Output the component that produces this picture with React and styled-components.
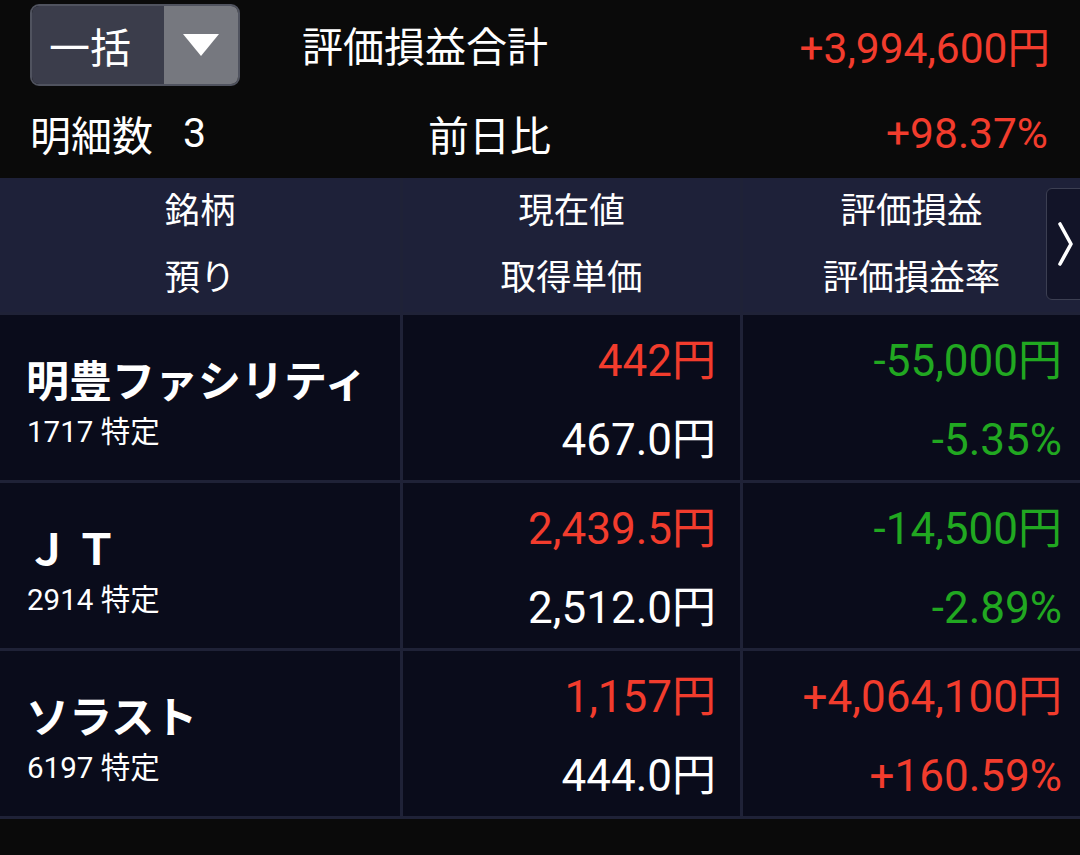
import React from 'react';
import styled, { createGlobalStyle } from 'styled-components';

const GlobalStyle = createGlobalStyle`
  html, body {
    margin: 0;
    padding: 0;
    background: #0a0a0a;
  }
  body {
    font-family: Roboto, "Noto Sans CJK JP", sans-serif;
    color: #fff;
  }
`;

const RED = '#f23c2d';
const GREEN = '#21a821';

const Page = styled.div`
  width: 1080px;
  height: 855px;
  overflow: hidden;
  background: #0a0a0a;
`;

const Summary = styled.div`
  display: flex;
  flex-direction: column;
`;

const SummaryRow = styled.div`
  display: flex;
  align-items: center;
  height: ${(p) => p.$h}px;
  padding: 0 ${(p) => p.$pr}px 0 30px;
  font-size: 41px;
`;

const Dropdown = styled.div`
  display: flex;
  width: 210px;
  height: 82px;
  margin-top: 2px;
  box-sizing: border-box;
  border: 2px solid #50535f;
  border-radius: 9px;
  overflow: hidden;
`;

const DropLabel = styled.div`
  flex: 0 0 132px;
  display: flex;
  align-items: center;
  padding-left: 17px;
  box-sizing: border-box;
  background: #3b3d4b;
  font-size: 41px;
`;

const DropArrow = styled.div`
  flex: 1;
  display: flex;
  align-items: center;
  justify-content: center;
  background: #76787f;
`;

const LeftBox = styled.div`
  flex: 0 0 ${(p) => p.$w}px;
  display: flex;
  align-items: center;
`;

const Count = styled.span`
  margin-left: 30px;
`;

const Label = styled.div`
  white-space: nowrap;
`;

const Value = styled.div`
  margin-left: auto;
  color: ${(p) => p.$color};
  font-size: 42.5px;
  white-space: nowrap;
`;

const Table = styled.div`
  display: grid;
  grid-template-columns: 400px 337px 337px;
  gap: 3px;
  background: #1f2237;
  padding-bottom: 3px;
`;

const HeaderCell = styled.div`
  display: flex;
  flex-direction: column;
  align-items: center;
  background: #1e2139;
  height: 134px;
  font-size: 35.5px;
  position: relative;
`;

const HeaderLine = styled.div`
  height: 67px;
  line-height: 67px;
`;

const MoreButton = styled.div`
  position: absolute;
  top: 10px;
  right: -10px;
  width: 44px;
  height: 112px;
  box-sizing: border-box;
  border: 1px solid #3c3f52;
  border-radius: 6px;
  background: #121428;
  display: flex;
  align-items: center;
  padding-left: 10px;
`;

const NameCell = styled.div`
  background: #0a0c1b;
  height: 165px;
  padding: 42px 0 0 26px;
  box-sizing: border-box;
`;

const Name = styled.div`
  font-size: 43px;
  font-weight: 700;
  line-height: 50px;
  white-space: nowrap;
  letter-spacing: ${(p) => (p.$wide ? '6px' : '0')};
`;

const Code = styled.div`
  font-size: 29.5px;
  line-height: 36px;
  margin-top: 7px;
  padding-left: 1px;
`;

const ValueCell = styled.div`
  background: #0a0c1b;
  height: 165px;
  padding: 22px ${(p) => p.$pr}px 0 0;
  box-sizing: border-box;
  display: flex;
  flex-direction: column;
  align-items: flex-end;
  gap: 31px;
`;

const Num = styled.div`
  font-size: 44px;
  line-height: 48px;
  color: ${(p) => p.$color};
  white-space: nowrap;
`;

const rows = [
  {
    name: '明豊ファシリティ',
    code: '1717 特定',
    price: '442円',
    priceColor: RED,
    cost: '467.0円',
    pl: '-55,000円',
    rate: '-5.35%',
    plColor: GREEN,
  },
  {
    name: 'ＪＴ',
    wide: true,
    code: '2914 特定',
    price: '2,439.5円',
    priceColor: RED,
    cost: '2,512.0円',
    pl: '-14,500円',
    rate: '-2.89%',
    plColor: GREEN,
  },
  {
    name: 'ソラスト',
    code: '6197 特定',
    price: '1,157円',
    priceColor: RED,
    cost: '444.0円',
    pl: '+4,064,100円',
    rate: '+160.59%',
    plColor: RED,
  },
];

function Triangle() {
  return (
    <svg width="36" height="24" viewBox="0 0 36 24">
      <polygon points="0,1 36,1 18,23" fill="#fff" />
    </svg>
  );
}

function Chevron() {
  return (
    <svg width="18" height="46" viewBox="0 0 18 46">
      <polyline
        points="3,3 14,23 3,43"
        fill="none"
        stroke="#fff"
        strokeWidth="3.6"
        strokeLinecap="round"
        strokeLinejoin="round"
      />
    </svg>
  );
}

export default function App() {
  return (
    <Page>
      <GlobalStyle />
      <Summary>
        <SummaryRow $h={88} $pr={30}>
          <LeftBox $w={272}>
            <Dropdown>
              <DropLabel>一括</DropLabel>
              <DropArrow>
                <Triangle />
              </DropArrow>
            </Dropdown>
          </LeftBox>
          <Label>評価損益合計</Label>
          <Value $color={RED}>+3,994,600円</Value>
        </SummaryRow>
        <SummaryRow $h={90} $pr={32}>
          <LeftBox $w={398}>
            明細数<Count>3</Count>
          </LeftBox>
          <Label>前日比</Label>
          <Value $color={RED}>+98.37%</Value>
        </SummaryRow>
      </Summary>
      <Table>
        <HeaderCell>
          <HeaderLine>銘柄</HeaderLine>
          <HeaderLine>預り</HeaderLine>
        </HeaderCell>
        <HeaderCell>
          <HeaderLine>現在値</HeaderLine>
          <HeaderLine>取得単価</HeaderLine>
        </HeaderCell>
        <HeaderCell>
          <HeaderLine>評価損益</HeaderLine>
          <HeaderLine>評価損益率</HeaderLine>
          <MoreButton>
            <Chevron />
          </MoreButton>
        </HeaderCell>
        {rows.map((r) => (
          <React.Fragment key={r.code}>
            <NameCell>
              <Name $wide={r.wide}>{r.name}</Name>
              <Code>{r.code}</Code>
            </NameCell>
            <ValueCell $pr={24}>
              <Num $color={r.priceColor}>{r.price}</Num>
              <Num $color="#fff">{r.cost}</Num>
            </ValueCell>
            <ValueCell $pr={18}>
              <Num $color={r.plColor}>{r.pl}</Num>
              <Num $color={r.plColor}>{r.rate}</Num>
            </ValueCell>
          </React.Fragment>
        ))}
      </Table>
    </Page>
  );
}
